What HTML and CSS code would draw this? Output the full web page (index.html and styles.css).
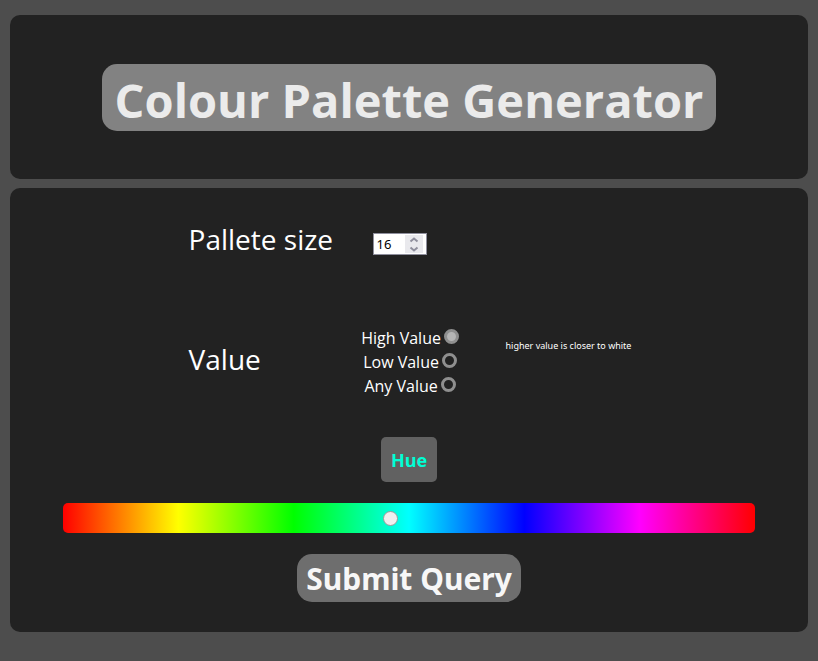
FILE: index.html
```html
<!DOCTYPE html>
<html lang="en">
<head>
<meta charset="utf-8">
<title>Colour Palette Generator</title>
<link rel="stylesheet" href="styles.css">
</head>
<body>
<header class="panel banner">
  <h1 class="title">Colour Palette Generator</h1>
</header>
<main class="panel">
  <form class="form">
    <div class="options">
      <label class="name" for="size">Pallete size</label>
      <div class="number">
        <input class="number-input" id="size" type="number" value="16">
        <svg class="spinner" viewBox="0 0 18 18" aria-hidden="true">
          <path d="M5.500 6.500l3.500-3 3.500 3M5.500 12.500l3.500 3 3.500-3"/>
        </svg>
      </div>
      <span class="name value-name" id="value-name">Value</span>
      <div class="choices" role="radiogroup" aria-labelledby="value-name">
        <div class="choice"><label for="high">High Value</label><input class="radio" type="radio" id="high" name="value" checked></div>
        <div class="choice"><label for="low">Low Value</label><input class="radio" type="radio" id="low" name="value"></div>
        <div class="choice"><label for="any">Any Value</label><input class="radio" type="radio" id="any" name="value"></div>
      </div>
      <p class="note">higher value is closer to white</p>
    </div>
    <label class="hue-name" for="hue">Hue</label>
    <input class="hue" id="hue" type="range" min="0" max="360" value="170">
    <button class="submit" type="submit">Submit Query</button>
  </form>
</main>
</body>
</html>
```
FILE: styles.css
```css
* {
  box-sizing: border-box;
}

body {
  margin: 15px 10px;
  background: #4d4d4d;
  color: #fff;
  font: 16px/24px "Open Sans", "Noto Sans", sans-serif;
}

.panel {
  margin-bottom: 9px;
  border-radius: 10px;
  background: #222;
}

.banner {
  padding: 49px 16px 48px;
  text-align: center;
}

.title {
  display: inline-block;
  margin: 0;
  padding: 6px 13px 1px;
  border-radius: 15px;
  background: #828282;
  color: #ebebeb;
  font-size: 47px;
  line-height: 60px;
  vertical-align: top;
}

.form {
  display: flex;
  flex-direction: column;
  align-items: center;
  padding: 30px 16px;
}

.options {
  display: grid;
  grid-template-columns: 170px 103px auto;
  justify-content: center;
  margin-bottom: 39px;
  padding-left: 2px;
}

.name {
  font-size: 28px;
  line-height: 42px;
}

.number {
  position: relative;
  width: 54px;
  height: 22px;
  margin: 15px 0 71px 14px;
}

.number-input {
  display: block;
  width: 100%;
  height: 100%;
  padding: 1px 3px;
  border: 1px solid #8f8f9d;
  background: #fff;
  color: #000;
  font: 13px "Noto Sans", sans-serif;
  appearance: textfield;
}

.number-input::-webkit-inner-spin-button {
  display: none;
}

.spinner {
  position: absolute;
  top: 2px;
  right: 4px;
  width: 18px;
  height: 18px;
  background: #e9e9ed;
  fill: none;
  stroke: #8f8f9d;
  stroke-width: 2;
  pointer-events: none;
}

.value-name {
  margin-top: 12px;
  grid-column: 1;
}

.choice {
  display: flex;
  justify-content: center;
  gap: 3px;
  white-space: nowrap;
}

.radio {
  width: 15px;
  height: 15px;
  flex: none;
  margin: 3px 0 0;
  border: 3px solid #8f8f8f;
  border-radius: 50%;
  appearance: none;
}

.radio:checked {
  background: #b5b5b5;
}

.note {
  margin: 8px 0 0 44px;
  font: 9px/24px "Noto Sans", sans-serif;
}

.hue-name {
  margin-bottom: 21px;
  padding: 11px 10px 10px;
  border-radius: 5px;
  background: #616161;
  color: #00ffd5;
  font-size: 18px;
  font-weight: bold;
}

.hue {
  width: calc(100% - 74px);
  height: 30px;
  margin: 0 0 21px;
  border-radius: 5px;
  background: linear-gradient(to right, #f00, #ff0, #0f0, #0ff, #00f, #f0f, #f00);
  appearance: none;
}

.hue::-webkit-slider-thumb {
  width: 15px;
  height: 15px;
  border: 1px solid #999;
  border-radius: 50%;
  background: #efefef;
  appearance: none;
}

.submit {
  padding: 5px 9px 3px;
  border: 0;
  border-radius: 15px;
  background: #6e6e6e;
  color: #f7f7f7;
  font: bold 30px/40px "Noto Sans", sans-serif;
}
```
